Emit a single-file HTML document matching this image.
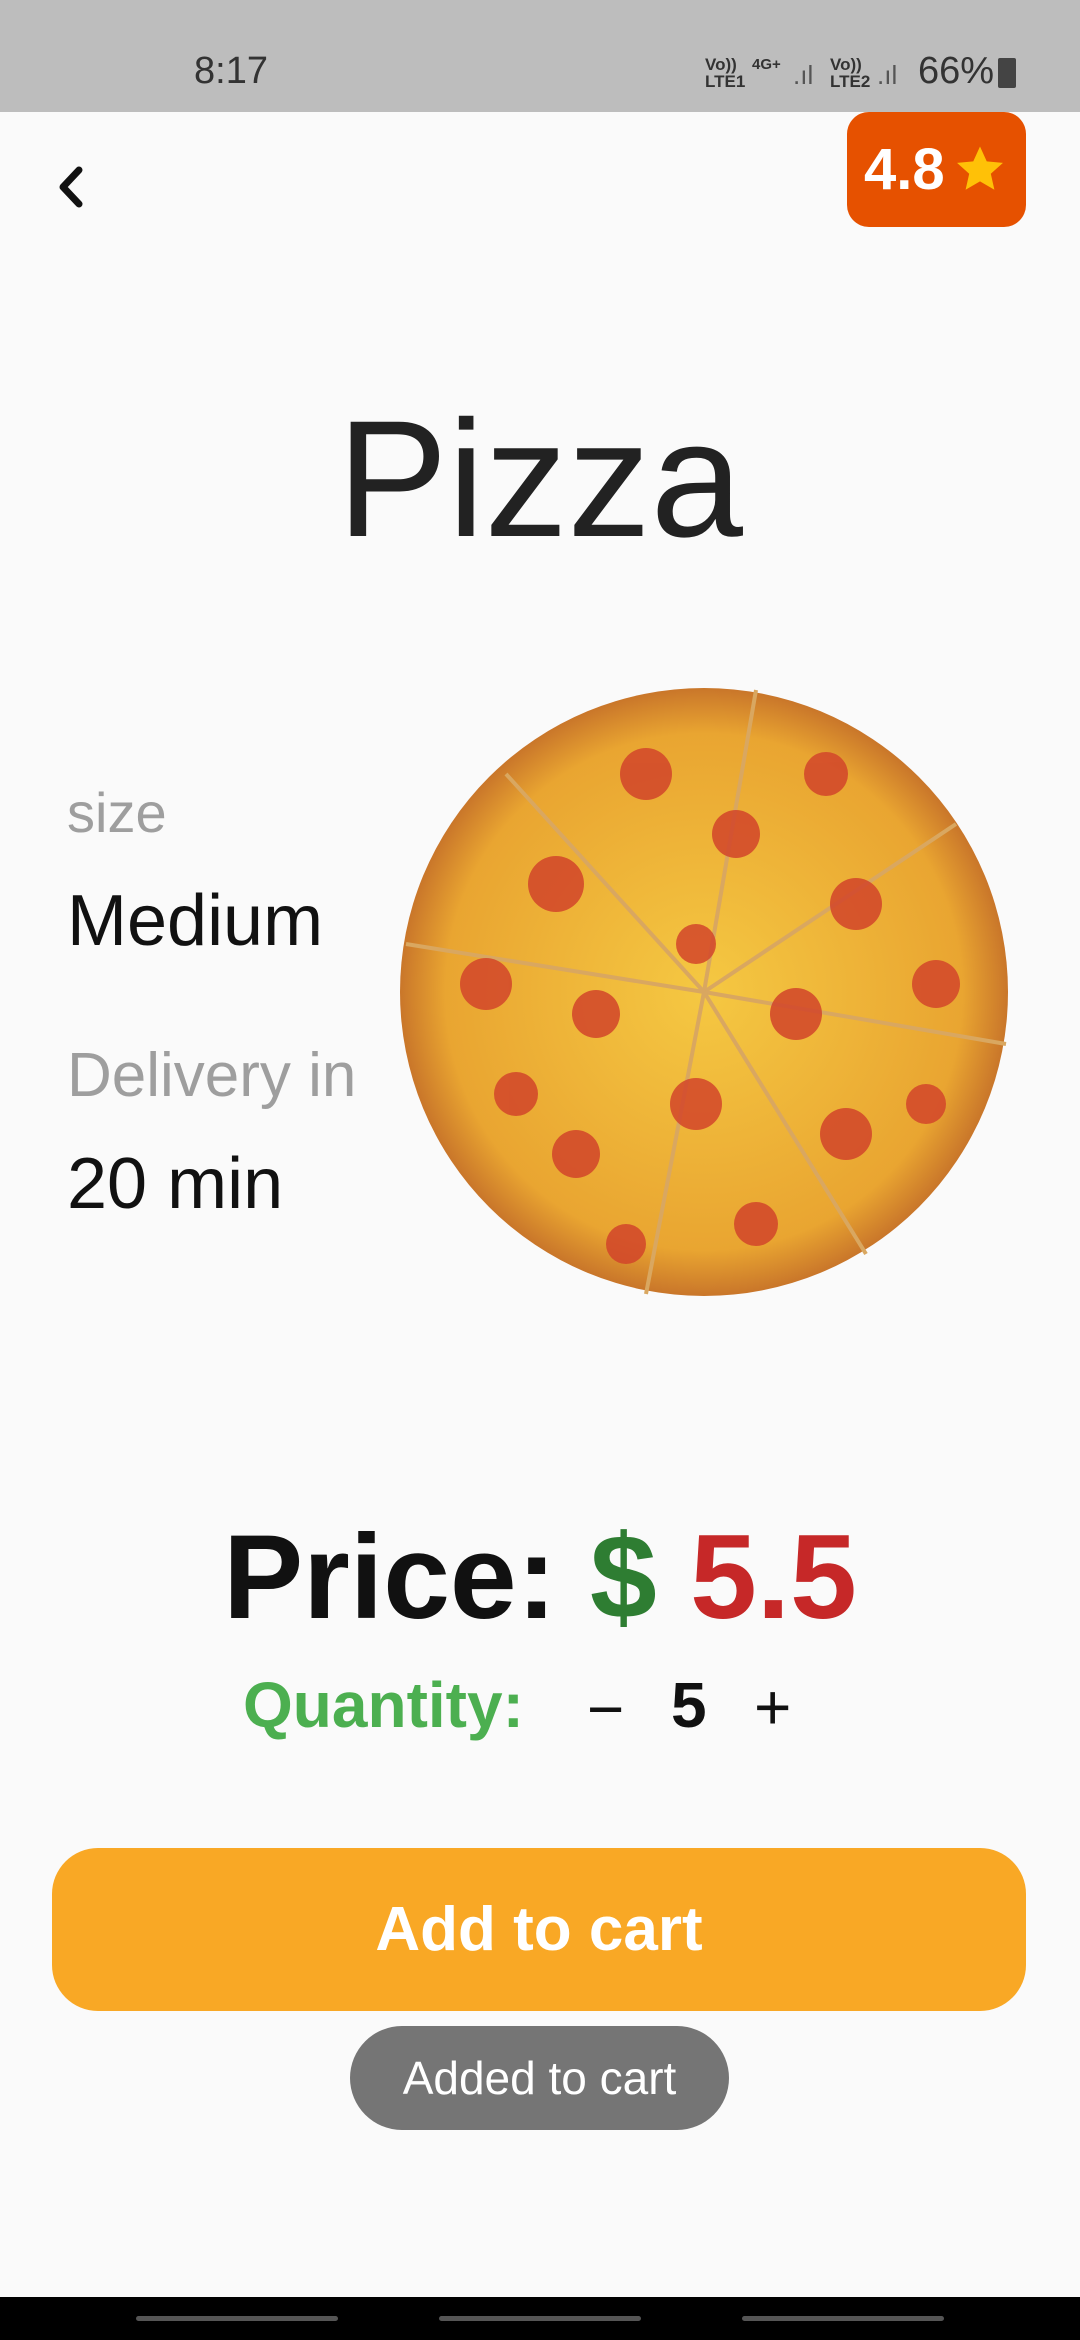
<!DOCTYPE html>
<html><head><meta charset="utf-8"><style>
*{margin:0;padding:0;box-sizing:border-box}
body{width:1080px;height:2340px;background:#fafafa;font-family:"Liberation Sans",Roboto,sans-serif;position:relative;overflow:hidden}
.a{position:absolute;white-space:nowrap}
</style></head><body>
<div class="a" style="left:0;top:0;width:1080px;height:112px;background:#bdbdbd"></div>
<div class="a" style="left:194px;top:50px;font-size:38px;color:#333">8:17</div>
<div class="a" style="left:705px;top:56px;font-size:17px;color:#333;font-weight:bold;line-height:17px">Vo))<br>LTE1</div>
<div class="a" style="left:752px;top:56px;font-size:15px;color:#333;font-weight:bold">4G+</div>
<div class="a" style="left:793px;top:60px;font-size:26px;color:#555">.ıl</div>
<div class="a" style="left:830px;top:56px;font-size:17px;color:#333;font-weight:bold;line-height:17px">Vo))<br>LTE2</div>
<div class="a" style="left:877px;top:60px;font-size:26px;color:#555">.ıl</div>
<div class="a" style="left:918px;top:50px;font-size:38px;color:#333">66%</div>
<div class="a" style="left:998px;top:58px;width:18px;height:30px;background:#444;border-radius:2px"></div>
<svg class="a" style="left:52px;top:162px" width="40" height="50" viewBox="0 0 40 50"><path d="M27 8 L11 25 L27 42" fill="none" stroke="#111" stroke-width="7" stroke-linecap="round" stroke-linejoin="round"/></svg>
<div class="a" style="left:847px;top:112px;width:179px;height:115px;background:#e65100;border-radius:22px"></div>
<div class="a" style="left:864px;top:136px;font-size:58px;font-weight:bold;color:#fff">4.8</div>
<svg class="a" style="left:953px;top:142px" width="54" height="54" viewBox="0 0 24 24"><path d="M12 2l3 6.6 7.2.7-5.4 4.8 1.6 7.1L12 17.5 5.6 21.2l1.6-7.1L1.8 9.3 9 8.6z" fill="#ffc107"/></svg>
<div class="a" style="left:0;width:1080px;top:385px;text-align:center;font-size:166px;color:#222">Pizza</div>
<div class="a" style="left:67px;top:780px;font-size:56px;color:#9e9e9e">size</div>
<div class="a" style="left:67px;top:880px;font-size:72px;color:#111">Medium</div>
<div class="a" style="left:67px;top:1040px;font-size:62px;color:#9e9e9e">Delivery in</div>
<div class="a" style="left:67px;top:1143px;font-size:72px;color:#111">20 min</div>
<svg class="a" style="left:396px;top:684px" width="616" height="616" viewBox="0 0 616 616">
<defs><radialGradient id="g"><stop offset="0" stop-color="#f5c842"/><stop offset=".85" stop-color="#e9a531"/><stop offset="1" stop-color="#c9762a"/></radialGradient></defs>
<circle cx="308" cy="308" r="304" fill="url(#g)"/>
<g stroke="#d9a760" stroke-width="4"><line x1="308" y1="308" x2="360" y2="6"/><line x1="308" y1="308" x2="560" y2="140"/><line x1="308" y1="308" x2="610" y2="360"/><line x1="308" y1="308" x2="470" y2="570"/><line x1="308" y1="308" x2="250" y2="610"/><line x1="308" y1="308" x2="10" y2="260"/><line x1="308" y1="308" x2="110" y2="90"/></g>
<g fill="#d2452a" opacity=".85"><circle cx="250" cy="90" r="26"/><circle cx="340" cy="150" r="24"/><circle cx="430" cy="90" r="22"/><circle cx="160" cy="200" r="28"/><circle cx="460" cy="220" r="26"/><circle cx="540" cy="300" r="24"/><circle cx="90" cy="300" r="26"/><circle cx="200" cy="330" r="24"/><circle cx="400" cy="330" r="26"/><circle cx="300" cy="420" r="26"/><circle cx="180" cy="470" r="24"/><circle cx="450" cy="450" r="26"/><circle cx="360" cy="540" r="22"/><circle cx="230" cy="560" r="20"/><circle cx="120" cy="410" r="22"/><circle cx="530" cy="420" r="20"/><circle cx="300" cy="260" r="20"/></g>
</svg>
<div class="a" style="left:0;width:1080px;top:1508px;text-align:center;font-size:120px;font-weight:bold;color:#111">Price: <span style="color:#2e7d32">$</span> <span style="color:#c62828">5.5</span></div>
<div class="a" style="left:243px;top:1668px;font-size:64px;font-weight:bold;color:#4caf50">Quantity:</div>
<div class="a" style="left:587px;top:1672px;font-size:64px;color:#111">−</div>
<div class="a" style="left:671px;top:1668px;font-size:64px;font-weight:bold;color:#111">5</div>
<div class="a" style="left:754px;top:1670px;font-size:64px;color:#111">+</div>
<div class="a" style="left:52px;top:1848px;width:974px;height:163px;background:#f9a825;border-radius:46px;color:#fff;font-size:62px;font-weight:bold;text-align:center;line-height:163px">Add to cart</div>
<div class="a" style="left:350px;top:2026px;width:379px;height:104px;background:#757575;border-radius:52px;color:#fff;font-size:46px;text-align:center;line-height:104px">Added to cart</div>
<div class="a" style="left:0;top:2297px;width:1080px;height:43px;background:#000"></div>
<div class="a" style="left:136px;top:2316px;width:202px;height:5px;background:#555;border-radius:3px"></div>
<div class="a" style="left:439px;top:2316px;width:202px;height:5px;background:#555;border-radius:3px"></div>
<div class="a" style="left:742px;top:2316px;width:202px;height:5px;background:#555;border-radius:3px"></div>
</body></html>
